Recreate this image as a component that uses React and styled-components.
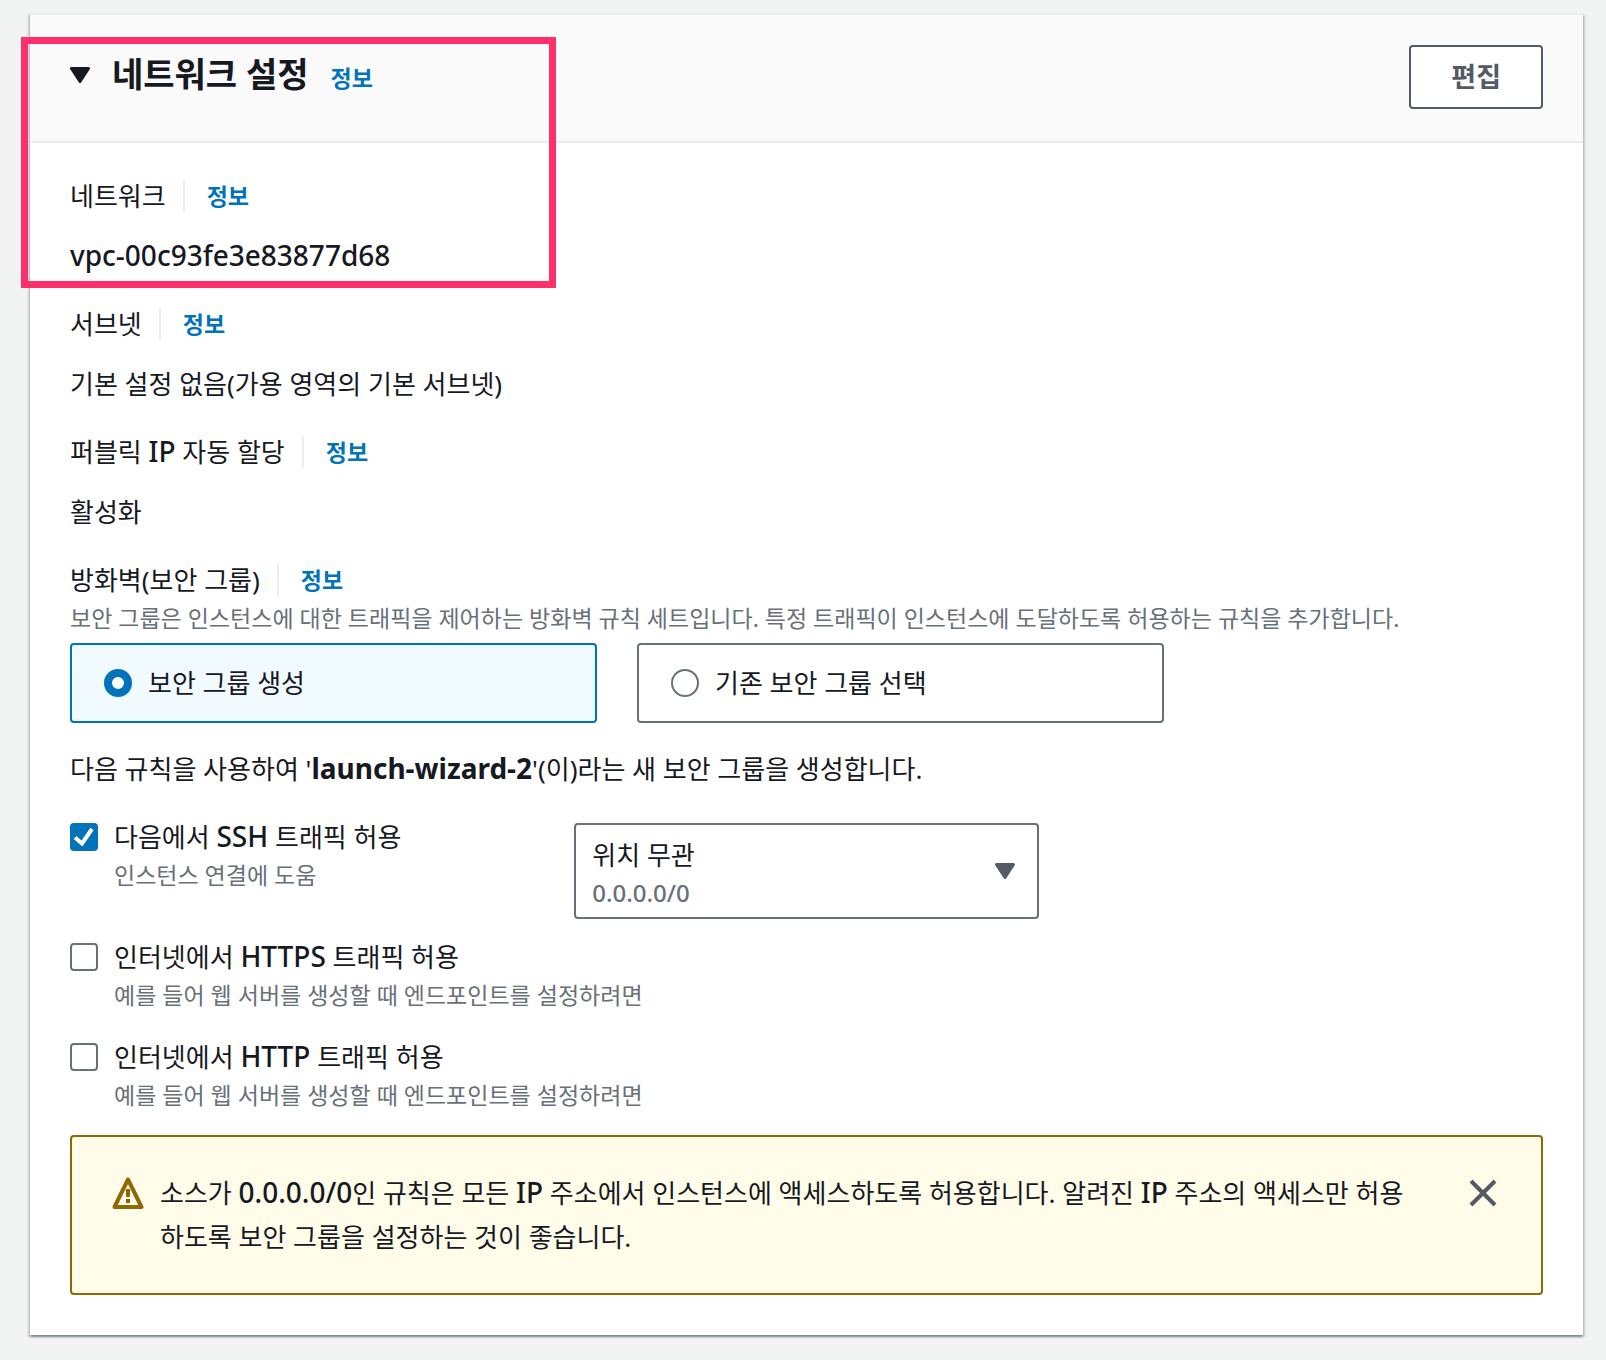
import React, { useState } from "react";
import styled, { createGlobalStyle } from "styled-components";

const GlobalStyle = createGlobalStyle`
  * {
    box-sizing: border-box;
  }

  body {
    margin: 0;
    background: #f2f3f3;
    color: #16191f;
    font-family: "Noto Sans", "Noto Sans CJK KR", sans-serif;
    font-size: 26px;
    line-height: 44px;
  }

  h2, p, dl, dt, dd, fieldset {
    margin: 0;
    padding: 0;
    border: 0;
  }

  button, select, input {
    margin: 0;
    font: inherit;
    color: inherit;
  }
`;

const Page = styled.main`
  padding: 13px 23px 25px 30px;
`;

const Card = styled.section`
  position: relative;
  background: #fff;
  border-top: 2px solid #eaeded;
  box-shadow: 0 2px 2px 0 rgba(0, 28, 36, 0.3),
    2px 2px 2px 0 rgba(0, 28, 36, 0.15),
    -2px 2px 2px 0 rgba(0, 28, 36, 0.15);
`;

const Highlight = styled.div`
  position: absolute;
  top: 22px;
  left: -9px;
  width: 535px;
  height: 251px;
  border: 7px solid #ff2f6b;
  pointer-events: none;
`;

const Header = styled.header`
  display: flex;
  justify-content: space-between;
  align-items: flex-start;
  padding: 30px 40px 32px;
  background: #fafafa;
  border-bottom: 2px solid #eaeded;
`;

const Heading = styled.div`
  display: flex;
  align-items: baseline;
  gap: 22px;
  line-height: 58px;
`;

const Title = styled.h2`
  font-size: 34px;
  font-weight: 700;
`;

const Toggle = styled.button`
  padding: 0;
  border: none;
  background: none;
  cursor: pointer;

  svg {
    margin-right: 22px;
    vertical-align: 4px;
  }
`;

const EditButton = styled.button`
  height: 64px;
  padding: 0 40px;
  border: 2px solid #545b64;
  border-radius: 4px;
  background: #fff;
  color: #545b64;
  font-size: 27px;
  font-weight: 700;
  cursor: pointer;
`;

const InfoLink = styled.a`
  color: #0073bb;
  font-size: 23px;
  font-weight: 700;
  text-decoration: none;
`;

const Body = styled.div`
  display: flex;
  flex-direction: column;
  gap: 24px;
  padding: 31px 40px 40px;
`;

const Field = styled.dl`
  display: flex;
  flex-direction: column;
  gap: 16px;
`;

const LabelRow = styled.dt`
  display: flex;
  align-items: center;
`;

const Divider = styled.span`
  width: 2px;
  height: 32px;
  margin: 0 22px 0 17px;
  background: #eaeded;
`;

const Latin = styled.span`
  font-size: 28px;
  font-weight: 500;
  line-height: 1;
`;

const GroupName = styled.strong`
  font-size: 28px;
  line-height: 1;
`;

const Hint = styled.p`
  color: #687078;
  font-size: 23px;
  line-height: 32px;
`;

const Tiles = styled.div`
  display: grid;
  grid-template-columns: repeat(2, minmax(0, 527px));
  gap: 40px;
  margin-top: 9px;
`;

const Tile = styled.label`
  display: flex;
  align-items: center;
  gap: 16px;
  height: 80px;
  padding: 0 32px;
  border: 2px solid ${(props) => (props.$selected ? "#0073bb" : "#687078")};
  border-radius: 4px;
  background: ${(props) => (props.$selected ? "#f1faff" : "#fff")};
`;

const Radio = styled.input`
  appearance: none;
  width: 28px;
  height: 28px;
  border: 2px solid #687078;
  border-radius: 50%;
  background: #fff;

  &:checked {
    border: 8px solid #0073bb;
  }
`;

const Rules = styled.div`
  display: grid;
  grid-template-columns: repeat(3, 1fr);
  column-gap: 40px;
`;

const Rule = styled.div`
  display: flex;
  gap: 16px;
`;

const CheckWrap = styled.span`
  display: grid;
  width: 28px;
  height: 28px;
  margin-top: 8px;

  > * {
    grid-area: 1 / 1;
  }

  svg {
    pointer-events: none;
  }
`;

const Checkbox = styled.input`
  appearance: none;
  width: 28px;
  height: 28px;
  border: 2px solid #687078;
  border-radius: 4px;
  background: #fff;

  &:checked {
    border-color: #0073bb;
    background: #0073bb;
  }
`;

const RuleLabel = styled.label`
  display: block;
`;

const SelectBox = styled.div`
  display: grid;
  grid-template-columns: 1fr auto;
  align-items: center;
  height: 96px;
  margin: 8px 0 -8px;
`;

const Select = styled.select`
  grid-area: 1 / 1 / 2 / 3;
  appearance: none;
  width: 100%;
  height: 96px;
  padding: 0 48px 32px 16px;
  border: 2px solid #687078;
  border-radius: 4px;
  background: #fff;
`;

const SelectHint = styled.span`
  grid-area: 1 / 1;
  align-self: end;
  padding: 0 0 10px 18px;
  color: #687078;
  font-size: 24px;
  font-weight: 500;
  line-height: 32px;
  pointer-events: none;
`;

const SelectArrow = styled.span`
  grid-area: 1 / 2;
  display: flex;
  padding-right: 24px;
  pointer-events: none;
`;

const Alert = styled.div`
  display: flex;
  align-items: flex-start;
  padding: 34px 38px 34px 40px;
  border: 2px solid #906806;
  border-radius: 4px;
  background: #fffce9;
`;

const AlertIcon = styled.svg`
  flex: none;
  width: 32px;
  height: 32px;
  margin: 6px 16px 0 0;
`;

const AlertText = styled.p`
  flex: 1;
  margin-right: 44px;
`;

const CloseButton = styled.button`
  display: flex;
  align-items: center;
  justify-content: center;
  width: 40px;
  height: 44px;
  padding: 0;
  border: none;
  background: none;
  color: #545b64;
  cursor: pointer;
`;

function Caret({ color }) {
  return (
    <svg width="20" height="16" viewBox="0 0 20 16" aria-hidden="true">
      <path d="M1.5 1.5h17L10 14.5z" fill={color} stroke={color} strokeWidth="3" strokeLinejoin="round" />
    </svg>
  );
}

function FieldLabel({ as, children }) {
  return (
    <LabelRow as={as}>
      <span>{children}</span>
      <Divider />
      <InfoLink href="#info">정보</InfoLink>
    </LabelRow>
  );
}

function SummaryField({ label, children }) {
  return (
    <Field>
      <FieldLabel>{label}</FieldLabel>
      <dd>{children}</dd>
    </Field>
  );
}

function TrafficRule({ id, checked, onChange, hint, children }) {
  return (
    <Rule>
      <CheckWrap>
        <Checkbox type="checkbox" id={id} checked={checked} onChange={onChange} />
        {checked && (
          <svg width="28" height="28" viewBox="0 0 28 28" aria-hidden="true">
            <path d="M5 14.5l7 6L22 6" fill="none" stroke="#fff" strokeWidth="4" />
          </svg>
        )}
      </CheckWrap>
      <div>
        <RuleLabel htmlFor={id}>{children}</RuleLabel>
        <Hint>{hint}</Hint>
      </div>
    </Rule>
  );
}

function App() {
  const [open, setOpen] = useState(true);
  const [group, setGroup] = useState("create");
  const [rules, setRules] = useState({ ssh: true, https: false, http: false });
  const [showAlert, setShowAlert] = useState(true);

  const toggleRule = (name) => setRules({ ...rules, [name]: !rules[name] });

  return (
    <>
      <GlobalStyle />
      <Page>
        <Card>
          <Header>
            <Heading>
              <Title>
                <Toggle type="button" aria-expanded={open} onClick={() => setOpen(!open)}>
                  <Caret color="#16191f" />
                  네트워크 설정
                </Toggle>
              </Title>
              <InfoLink href="#info">정보</InfoLink>
            </Heading>
            <EditButton type="button">편집</EditButton>
          </Header>

          {open && (
            <Body>
              <SummaryField label="네트워크">
                <Latin>vpc-00c93fe3e83877d68</Latin>
              </SummaryField>
              <SummaryField label="서브넷">기본 설정 없음(가용 영역의 기본 서브넷)</SummaryField>
              <SummaryField label={<>퍼블릭 <Latin>IP</Latin> 자동 할당</>}>활성화</SummaryField>

              <fieldset>
                <FieldLabel as="div">방화벽(보안 그룹)</FieldLabel>
                <Hint>
                  보안 그룹은 인스턴스에 대한 트래픽을 제어하는 방화벽 규칙 세트입니다. 특정 트래픽이 인스턴스에 도달하도록 허용하는 규칙을 추가합니다.
                </Hint>
                <Tiles>
                  <Tile $selected={group === "create"}>
                    <Radio type="radio" name="group" checked={group === "create"} onChange={() => setGroup("create")} />
                    보안 그룹 생성
                  </Tile>
                  <Tile $selected={group === "existing"}>
                    <Radio type="radio" name="group" checked={group === "existing"} onChange={() => setGroup("existing")} />
                    기존 보안 그룹 선택
                  </Tile>
                </Tiles>
              </fieldset>

              <p>
                다음 규칙을 사용하여 '<GroupName>launch-wizard-2</GroupName>'(이)라는 새 보안 그룹을 생성합니다.
              </p>

              <Rules>
                <TrafficRule id="ssh" checked={rules.ssh} onChange={() => toggleRule("ssh")} hint="인스턴스 연결에 도움">
                  다음에서 <Latin>SSH</Latin> 트래픽 허용
                </TrafficRule>
                <SelectBox>
                  <Select aria-label="소스 위치" defaultValue="any">
                    <option value="any">위치 무관</option>
                  </Select>
                  <SelectHint>0.0.0.0/0</SelectHint>
                  <SelectArrow>
                    <Caret color="#545b64" />
                  </SelectArrow>
                </SelectBox>
              </Rules>
              <TrafficRule
                id="https"
                checked={rules.https}
                onChange={() => toggleRule("https")}
                hint="예를 들어 웹 서버를 생성할 때 엔드포인트를 설정하려면"
              >
                인터넷에서 <Latin>HTTPS</Latin> 트래픽 허용
              </TrafficRule>
              <TrafficRule
                id="http"
                checked={rules.http}
                onChange={() => toggleRule("http")}
                hint="예를 들어 웹 서버를 생성할 때 엔드포인트를 설정하려면"
              >
                인터넷에서 <Latin>HTTP</Latin> 트래픽 허용
              </TrafficRule>

              {showAlert && (
                <Alert role="alert">
                  <AlertIcon viewBox="0 0 32 32" aria-hidden="true">
                    <path d="M16 2.5L29.5 30h-27z" fill="none" stroke="#906806" strokeWidth="4" strokeLinejoin="round" />
                    <path d="M16 12v8M16 22v4" stroke="#906806" strokeWidth="4" />
                  </AlertIcon>
                  <AlertText>
                    소스가 <Latin>0.0.0.0/0</Latin>인 규칙은 모든 <Latin>IP</Latin> 주소에서 인스턴스에 액세스하도록 허용합니다. 알려진 <Latin>IP</Latin> 주소의 액세스만 허용하도록 보안 그룹을 설정하는 것이 좋습니다.
                  </AlertText>
                  <CloseButton type="button" aria-label="닫기" onClick={() => setShowAlert(false)}>
                    <svg width="28" height="28" viewBox="0 0 28 28" aria-hidden="true">
                      <path d="M2 2l24 24M26 2L2 26" stroke="currentColor" strokeWidth="4" />
                    </svg>
                  </CloseButton>
                </Alert>
              )}
            </Body>
          )}

          <Highlight />
        </Card>
      </Page>
    </>
  );
}

export default App;
